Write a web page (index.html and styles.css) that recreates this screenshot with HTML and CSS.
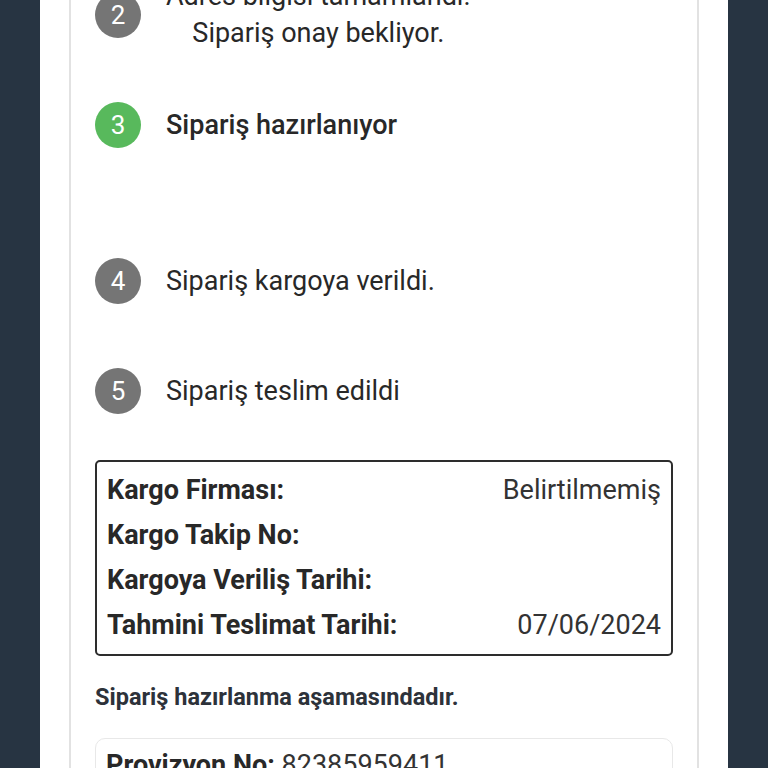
FILE: index.html
```html
<!DOCTYPE html>
<html lang="tr">
  <head>
    <meta charset="UTF-8" />
    <meta name="viewport" content="width=device-width, initial-scale=1.0" />
    <title>Sipariş Takip</title>
    <link rel="stylesheet" href="styles.css">
  </head>
  <body>
    <div class="page">
      <div class="order-card">
        <div class="steps">
          <div class="step">
            <div class="step-icon">2</div>
            <div class="step-label">
              Adres bilgisi tamamlandı.<br />
              Sipariş onay bekliyor.
            </div>
          </div>
          <div class="step" data-status="active">
            <div class="step-icon">3</div>
            <div class="step-label">Sipariş hazırlanıyor</div>
          </div>
          <div class="step-content"></div>
          <div class="step">
            <div class="step-icon">4</div>
            <div class="step-label">Sipariş kargoya verildi.</div>
          </div>
          <div class="step">
            <div class="step-icon">5</div>
            <div class="step-label">Sipariş teslim edildi</div>
          </div>
        </div>

        <div class="cargo-box">
          <div class="cargo-row">
            <span class="cargo-key">Kargo Firması:</span>
            <span class="cargo-value">Belirtilmemiş</span>
          </div>
          <div class="cargo-row">
            <span class="cargo-key">Kargo Takip No:</span>
            <span class="cargo-value"></span>
          </div>
          <div class="cargo-row">
            <span class="cargo-key">Kargoya Veriliş Tarihi:</span>
            <span class="cargo-value"></span>
          </div>
          <div class="cargo-row">
            <span class="cargo-key">Tahmini Teslimat Tarihi:</span>
            <span class="cargo-value">07/06/2024</span>
          </div>
        </div>

        <p class="order-note">Sipariş hazırlanma aşamasındadır.</p>

        <div class="payment-box">
          <div class="payment-row">
            <span class="cargo-key">Provizyon No:</span> 82385959411
          </div>
        </div>
      </div>
    </div>
  </body>
</html>
```

FILE: styles.css
```css
body {
  background-color: rgb(39, 52, 66);
  margin: 0px;
  height: 100vh;
  overflow: hidden;
  font-family: Roboto, 'Noto Sans', sans-serif;
  color: rgb(51, 51, 51);
}

.page {
  background-color: white;
  margin: 0px 40px;
  padding: 0px 29px;
  min-height: 100vh;
}

.order-card {
  margin-top: -40px;
  border: 2px solid rgb(226, 226, 226);
  border-top: none;
  padding: 0px 24px 40px;
}

.steps {
  display: flex;
  flex-direction: column;
}

.step {
  height: 110px;
  display: flex;
  align-items: center;
  gap: 25px;
}

.step-icon {
  width: 46px;
  height: 46px;
  flex-shrink: 0;
  border-radius: 100%;
  background-color: rgb(117, 117, 117);
  color: white;
  font-size: 26px;
  display: grid;
  place-items: center;
}

.step[data-status='active'] > .step-icon {
  background-color: rgb(88, 185, 92);
}

.step[data-status='active'] > .step-label {
  font-weight: 500;
}

.step-label {
  font-size: 27px;
  line-height: 37px;
  text-align: center;
  color: rgb(40, 40, 40);
}

.step-content {
  height: 46px;
}

.cargo-box {
  margin-top: 14px;
  border: 2px solid rgb(45, 45, 45);
  border-radius: 5px;
  padding: 6px 10px;
}

.cargo-row {
  display: flex;
  justify-content: space-between;
  font-size: 27px;
  line-height: 45px;
}

.cargo-key {
  font-weight: 700;
  color: rgb(40, 40, 40);
}

.cargo-value {
  color: rgb(51, 51, 51);
}

.order-note {
  margin: 25px 0px 25px;
  font-size: 23.5px;
  line-height: 32px;
  font-weight: 700;
  color: rgb(45, 50, 58);
}

.payment-box {
  border: 1.5px solid rgb(232, 232, 232);
  border-radius: 10px;
  padding: 4px 10px;
}

.payment-row {
  font-size: 27px;
  line-height: 45px;
}
```
